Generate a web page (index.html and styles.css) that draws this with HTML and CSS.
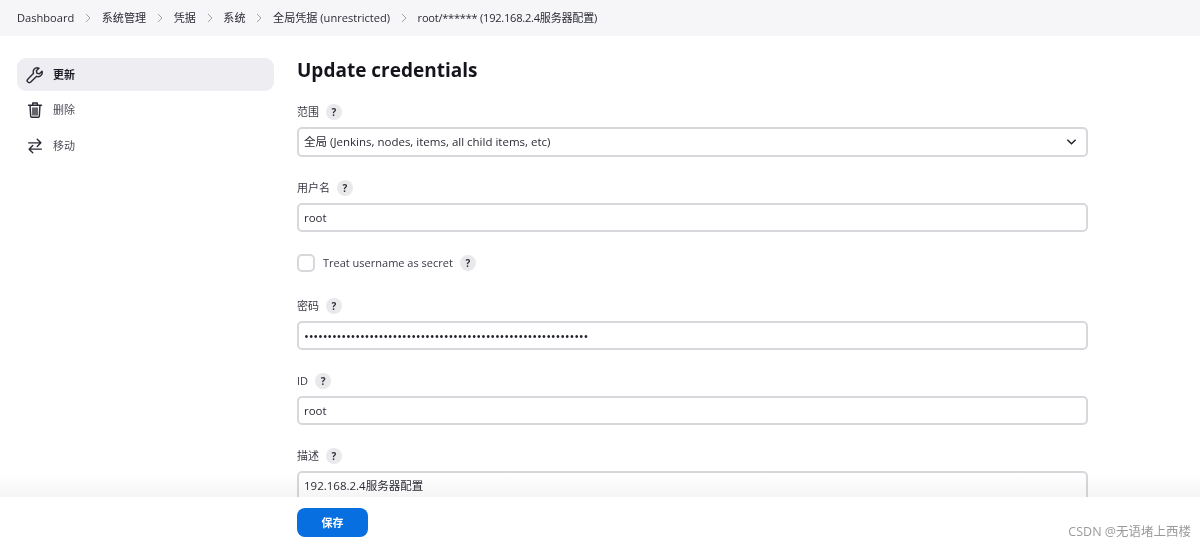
FILE: index.html
```html
<!DOCTYPE html>
<html lang="zh">
<head>
<meta charset="utf-8">
<title>Update credentials</title>
<link rel="stylesheet" href="styles.css">
</head>
<body>
<nav class="crumbs">
  <span>Dashboard</span><svg class="sep" viewBox="0 0 8 10"><path d="M2 1l4 4-4 4"/></svg>
  <span>系统管理</span><svg class="sep" viewBox="0 0 8 10"><path d="M2 1l4 4-4 4"/></svg>
  <span>凭据</span><svg class="sep" viewBox="0 0 8 10"><path d="M2 1l4 4-4 4"/></svg>
  <span>系统</span><svg class="sep" viewBox="0 0 8 10"><path d="M2 1l4 4-4 4"/></svg>
  <span>全局凭据 (unrestricted)</span><svg class="sep" viewBox="0 0 8 10"><path d="M2 1l4 4-4 4"/></svg>
  <span class="last">root/****** (192.168.2.4服务器配置)</span>
</nav>
<div class="layout">
  <aside class="side">
    <a class="item active">
      <svg class="ico" viewBox="0 0 20 20"><path d="M12.600 1.800a4.600 4.600 0 0 0-4.200 6.300L2 14.600a2.300 2.300 0 0 0 3.300 3.300l6.500-6.400a4.600 4.600 0 0 0 6-5.700l-2.900 2.900-2.700-.7-.7-2.700 2.900-2.900a4.600 4.600 0 0 0-1.800-.1z"/></svg>
      <span>更新</span>
    </a>
    <a class="item">
      <svg class="ico" viewBox="0 0 20 20"><path d="M2.800 4.700h14.400M7.500 4.500V2.300h5v2.200M4.500 4.700l.7 12.300a1.200 1.200 0 0 0 1.200 1.100h7.200a1.200 1.200 0 0 0 1.200-1.100l.7-12.300M7.800 7.700v7.800M10 7.700v7.800M12.200 7.700v7.800"/></svg>
      <span>删除</span>
    </a>
    <a class="item">
      <svg class="ico" viewBox="0 0 20 20"><path d="M3 6.500h13.500M12.500 2.500l4 4-4 4M17 13.500H3.500M7.500 9.500l-4 4 4 4"/></svg>
      <span>移动</span>
    </a>
  </aside>
  <main class="main">
    <h1>Update credentials</h1>
    <div class="field">
      <div class="label">范围<span class="help">?</span></div>
      <div class="box select">
        <span>全局 (Jenkins, nodes, items, all child items, etc)</span>
        <svg class="chev" viewBox="0 0 12 8"><path d="M1.500 1.500L6 6l4.500-4.500"/></svg>
      </div>
    </div>
    <div class="field">
      <div class="label">用户名<span class="help">?</span></div>
      <div class="box">root</div>
    </div>
    <div class="field check">
      <span class="tick"></span><span>Treat username as secret</span><span class="help">?</span>
    </div>
    <div class="field">
      <div class="label">密码<span class="help">?</span></div>
      <div class="box dots">•••••••••••••••••••••••••••••••••••••••••••••••••••••••••••••</div>
    </div>
    <div class="field">
      <div class="label">ID<span class="help">?</span></div>
      <div class="box">root</div>
    </div>
    <div class="field">
      <div class="label">描述<span class="help">?</span></div>
      <div class="box area">192.168.2.4服务器配置</div>
    </div>
  </main>
</div>
<footer class="bar">
  <button class="save">保存</button>
</footer>
<div class="mark">CSDN @无语堵上西楼</div>
</body>
</html>
```
FILE: styles.css
```css
* { box-sizing: border-box; }
html, body { height: 100%; }
body {
  margin: 0;
  height: 544px;
  overflow: hidden;
  position: relative;
  background: #fff;
  color: #2b2b36;
  font: 11.5px/16px "Open Sans", "Noto Sans CJK SC", sans-serif;
}
.crumbs {
  height: 36px;
  background: #f6f6f8;
  display: flex;
  align-items: center;
  padding-left: 17px;
  font-size: 11.1px;
  white-space: nowrap;
}
.last { letter-spacing: -.25px; }
.sep {
  width: 8px;
  height: 10px;
  margin: 0 9.750px;
  fill: none;
  stroke: #a0a0a8;
  stroke-width: 1;
}
.layout {
  display: flex;
  padding-left: 17px;
}
.side {
  width: 257px;
  padding-top: 22px;
  flex: none;
  display: flex;
  flex-direction: column;
  gap: 2.500px;
}
.item {
  height: 33px;
  border-radius: 9px;
  display: flex;
  align-items: center;
  padding-left: 9px;
  gap: 9px;
  font-size: 11px;
  color: #4c4c58;
}
.item.active {
  background: #eeeef2;
  color: #1c1c26;
  font-weight: 700;
}
.ico {
  width: 18px;
  height: 18px;
  fill: none;
  stroke: #2b2b36;
  stroke-width: 1.600;
  stroke-linecap: round;
  stroke-linejoin: round;
}
.main {
  width: 791px;
  margin-left: 23px;
  padding-top: 22px;
}
h1 {
  margin: 0 0 21px;
  font-size: 19px;
  line-height: 24px;
  font-weight: 700;
  color: #14141c;
}
.field { margin-bottom: 22px; }
.label {
  display: flex;
  align-items: center;
  height: 18px;
  margin-bottom: 6px;
  font-size: 11px;
  color: #3a3a46;
}
.help {
  width: 16px;
  height: 16px;
  margin-left: 7px;
  border-radius: 50%;
  background: #e9e9eb;
  color: #33333d;
  font-size: 10px;
  font-weight: 700;
  line-height: 16px;
  text-align: center;
}
.box {
  height: 29px;
  border: 2px solid #d8d8dc;
  border-radius: 5px;
  padding: 0 5px;
  display: flex;
  align-items: center;
  background: #fff;
}
.select {
  height: 30px;
  justify-content: space-between;
  padding-right: 9px;
}
.chev {
  width: 11px;
  height: 8px;
  fill: none;
  stroke: #22222c;
  stroke-width: 1.600;
}
.check {
  display: flex;
  align-items: center;
  height: 18px;
  margin-bottom: 25px;
  font-size: 11px;
  color: #3a3a46;
}
.tick {
  width: 18px;
  height: 18px;
  margin-right: 8px;
  border: 2px solid #d8d8dc;
  border-radius: 5px;
}
.dots {
  font-size: 13px;
  letter-spacing: -.23px;
  color: #22222c;
  overflow: hidden;
  white-space: nowrap;
}
.area {
  height: 60px;
  align-items: flex-start;
  padding-top: 5px;
}
.bar {
  position: absolute;
  left: 0;
  right: 0;
  bottom: 0;
  height: 47px;
  background: #fff;
  padding: 11px 0 0 297px;
}
.bar::before {
  content: "";
  position: absolute;
  left: 0;
  right: 0;
  top: -24px;
  height: 24px;
  background: linear-gradient(to bottom, #fff, #f5f5f6);
  mix-blend-mode: multiply;
}
.save {
  width: 71px;
  height: 29px;
  border: 0;
  border-radius: 8px;
  background: #086fe0;
  color: #fff;
  font: 700 11px/16px "Open Sans", "Noto Sans CJK SC", sans-serif;
}
.mark {
  position: absolute;
  right: 9px;
  bottom: 4px;
  font-size: 12.500px;
  line-height: 16px;
  color: #9a9a9a;
}
```
